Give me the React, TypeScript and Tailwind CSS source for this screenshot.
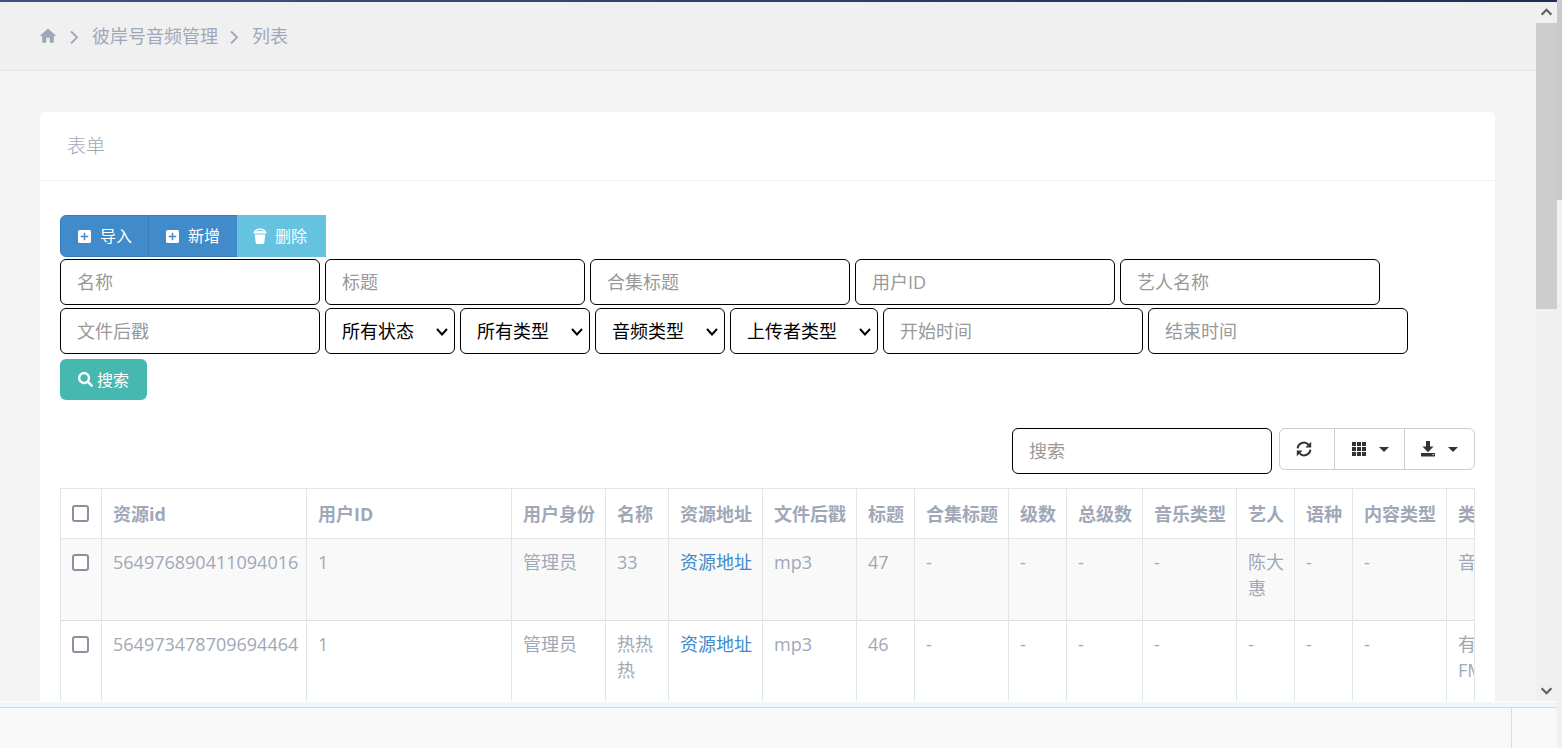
import { FaSearch } from "react-icons/fa";
import { MdHome } from "react-icons/md";

type Filter = { label: string; type: "text" } | { label: string; type: "select"; wide?: boolean };

const filters: Filter[] = [
  { label: "名称", type: "text" },
  { label: "标题", type: "text" },
  { label: "合集标题", type: "text" },
  { label: "用户ID", type: "text" },
  { label: "艺人名称", type: "text" },
  { label: "文件后戳", type: "text" },
  { label: "所有状态", type: "select" },
  { label: "所有类型", type: "select" },
  { label: "音频类型", type: "select" },
  { label: "上传者类型", type: "select", wide: true },
  { label: "开始时间", type: "text" },
  { label: "结束时间", type: "text" },
];

const columns = [
  { title: "资源id", width: "w-[205px]" },
  { title: "用户ID", width: "w-[205px]" },
  { title: "用户身份", width: "w-[94px]" },
  { title: "名称", width: "w-[63px]" },
  { title: "资源地址", width: "w-[94px]" },
  { title: "文件后戳", width: "w-[94px]" },
  { title: "标题", width: "w-[58px]" },
  { title: "合集标题", width: "w-[94px]" },
  { title: "级数", width: "w-[58px]" },
  { title: "总级数", width: "w-[76px]" },
  { title: "音乐类型", width: "w-[94px]" },
  { title: "艺人", width: "w-[58px]" },
  { title: "语种", width: "w-[58px]" },
  { title: "内容类型", width: "w-[94px]" },
  { title: "类型", width: "w-[58px]" },
];

const rows = [
  ["564976890411094016", "1", "管理员", "33", "资源地址", "mp3", "47", "-", "-", "-", "-", "陈大惠", "-", "-", "音频"],
  ["564973478709694464", "1", "管理员", "热热热", "资源地址", "mp3", "46", "-", "-", "-", "-", "-", "-", "-", "有声FM"],
];

const inputClass =
  "h-[46px] w-[260px] rounded-md border border-black bg-white px-4 text-lg text-black placeholder:text-[#999] placeholder:opacity-100 focus:outline-none";

function Chevron({ className, d }: { className: string; d: string }) {
  return (
    <svg className={className} viewBox="0 0 12 12" fill="none" stroke="currentColor">
      <path d={d} />
    </svg>
  );
}

function PlusIcon() {
  return (
    <svg className="size-[15px]" viewBox="0 0 15 15">
      <rect x="1" y="1" width="13" height="13" rx="1.500" fill="currentColor" />
      <path d="M7.500 3.700v7.600M3.700 7.500h7.600" stroke="#428bca" strokeWidth="1.500" />
    </svg>
  );
}

function TrashIcon() {
  return (
    <svg className="h-4 w-[14px]" viewBox="0 0 14 16" fill="currentColor">
      <path d="M1 4.600C1 2 3.400.4 7 .4S13 2 13 4.600z" />
      <path d="M3.600 3.400C5.200 1.800 8.800 1.800 10.400 3.400" stroke="#65c3df" strokeWidth="1" fill="none" />
      <path d="M.6 3.800h12.800v1.600H.6zM1.800 6.400h10.400l-.8 8c-.1 1-1 1.600-2 1.600H4.600c-1 0-1.900-.6-2-1.600z" />
    </svg>
  );
}

function RefreshIcon() {
  return (
    <svg className="size-4" viewBox="0 0 16 16" fill="none" stroke="currentColor" strokeWidth="2">
      <path d="M1.600 7.300A6.300 6.300 0 0 1 12.600 3.800M14.400 8.700A6.300 6.300 0 0 1 3.400 12.200" />
      <path d="M15.200.8v5.800H9.400zM.8 15.200V9.400h5.800z" fill="currentColor" stroke="none" />
    </svg>
  );
}

function GridIcon() {
  return (
    <svg className="size-4" viewBox="0 0 16 16" fill="currentColor">
      <path d="M1 1h4v4H1zM6 1h4v4H6zM11 1h4v4h-4zM1 6h4v4H1zM6 6h4v4H6zM11 6h4v4h-4zM1 11h4v4H1zM6 11h4v4H6zM11 11h4v4h-4z" />
    </svg>
  );
}

function SaveIcon() {
  return (
    <svg className="size-4" viewBox="0 0 16 16" fill="currentColor">
      <path d="M6 0h4v5.500h3.500L8 11.200 2.500 5.500H6z" />
      <path fillRule="evenodd" d="M1 12h14v3.500H1zM12.600 13v1.200h1.200V13z" />
    </svg>
  );
}

function Caret() {
  return (
    <svg className="h-[5px] w-[10px]" viewBox="0 0 10 5" fill="currentColor">
      <path d="M0 0h10L5 5z" />
    </svg>
  );
}

function Checkbox({ label }: { label: string }) {
  return (
    <input
      type="checkbox"
      aria-label={label}
      className="mt-[5px] block size-[17px] appearance-none rounded-[3px] border-2 border-[#918d9f] bg-white checked:bg-[#918d9f]"
    />
  );
}

function FilterField({ filter }: { filter: Filter }) {
  if (filter.type === "text") {
    return <input type="text" aria-label={filter.label} placeholder={filter.label} className={inputClass} />;
  }
  return (
    <div className={filter.wide ? "relative w-[148px]" : "relative w-[130px]"}>
      <select
        aria-label={filter.label}
        className="h-[46px] w-full appearance-none rounded-md border border-black bg-white pl-4 text-lg text-black focus:outline-none"
      >
        <option>{filter.label}</option>
      </select>
      <Chevron
        className="pointer-events-none absolute top-[18px] right-[7px] size-3 stroke-2 text-black"
        d="M1 3l5 5.500 5-5.500"
      />
    </div>
  );
}

function Breadcrumb() {
  return (
    <nav className="flex h-[69px] items-center border-b border-[#e5e5e5] bg-[#f0f0f0] px-10 text-lg">
      <a href="#" aria-label="首页">
        <MdHome className="-ml-0.5 size-5" />
      </a>
      <Chevron className="mx-[9px] size-4 stroke-[1.500]" d="M3 2.500l4.500 4.500L3 11.500" />
      <a href="#">彼岸号音频管理</a>
      <Chevron className="mx-[9px] size-4 stroke-[1.500]" d="M3 2.500l4.500 4.500L3 11.500" />
      <a href="#">列表</a>
    </nav>
  );
}

function Toolbar() {
  return (
    <div className="mt-7 flex items-start justify-end gap-[7px]">
      <input type="text" aria-label="搜索" placeholder="搜索" className={inputClass} />
      <div className="flex h-[42px] divide-x divide-[#ccc] rounded-md border border-[#ccc] text-[#333]">
        <button aria-label="刷新" className="flex w-[55px] items-center pl-4">
          <RefreshIcon />
        </button>
        <button aria-label="列" className="flex w-[70px] items-center gap-3 pl-4">
          <GridIcon />
          <Caret />
        </button>
        <button aria-label="导出" className="flex w-[69px] items-center gap-3 pl-[15px]">
          <SaveIcon />
          <Caret />
        </button>
      </div>
    </div>
  );
}

function ResourceTable() {
  return (
    <div className="mt-[14px] overflow-hidden border-r border-[#e1e6e9]">
      <table className="w-[1444px] table-fixed border-collapse text-left text-lg leading-[26px]">
        <thead>
          <tr className="h-[50px]">
            <th className="w-[41px] border border-[#e1e6e9] pt-[11px] pl-[11px] align-top">
              <Checkbox label="全选" />
            </th>
            {columns.map((col) => (
              <th
                key={col.title}
                className={`${col.width} border border-[#e1e6e9] pr-[10px] pl-[11px] font-bold whitespace-nowrap`}
              >
                {col.title}
              </th>
            ))}
          </tr>
        </thead>
        <tbody>
          {rows.map((row) => (
            <tr key={row[0]} className="h-[82px] border-b border-[#ddd] align-top odd:bg-[#f9f9f9]">
              <td className="border-x border-[#e1e6e9] pt-[10px] pl-[11px]">
                <Checkbox label={row[0]} />
              </td>
              {row.map((value, i) => (
                <td key={columns[i].title} className="border-x border-[#e1e6e9] pt-[10px] pr-[10px] pl-[11px]">
                  {columns[i].title === "资源地址" ? (
                    <a href="#" className="text-[#428bca]">
                      {value}
                    </a>
                  ) : (
                    value
                  )}
                </td>
              ))}
            </tr>
          ))}
        </tbody>
      </table>
    </div>
  );
}

export default function App() {
  return (
    <div className="flex h-screen overflow-hidden bg-[#f0f0f0] font-['Open_Sans','Noto_Sans_CJK_SC',sans-serif] text-[#a0a8b8]">
      <div className="flex min-w-0 flex-1 flex-col">
        <div className="h-0.5 shrink-0 bg-linear-to-r from-[#3c5480] to-[#1b2f55]" />

        <div className="flex min-h-0 flex-1">
          <main className="min-w-0 flex-1 overflow-hidden bg-[#f4f4f4]">
            <Breadcrumb />
            <section className="mt-[41px] mr-[41px] ml-10 rounded-md bg-white">
              <h1 className="flex h-[69px] items-center border-b border-dotted border-[#e4e4e4] px-[27px] text-[19px] font-light">
                表单
              </h1>
              <div className="px-5 pt-[34px]">
                <div className="flex h-[42px] text-base text-white">
                  <button className="flex w-[89px] items-center gap-2 rounded-l-md border border-[#357ebd] bg-[#428bca] pl-4">
                    <PlusIcon />
                    导入
                  </button>
                  <button className="flex w-[88px] items-center gap-2 border-y border-[#357ebd] bg-[#428bca] pl-4">
                    <PlusIcon />
                    新增
                  </button>
                  <button className="flex w-[89px] items-center gap-2 bg-[#65c3df] pl-4">
                    <TrashIcon />
                    删除
                  </button>
                </div>

                <form className="mt-0.5 flex flex-wrap gap-x-[5px] gap-y-[3px]">
                  {filters.map((filter) => (
                    <FilterField key={filter.label} filter={filter} />
                  ))}
                  <button
                    type="button"
                    className="mt-0.5 flex h-[41px] w-[87px] items-center justify-center gap-1 rounded-md bg-[#46b8b0] text-base text-white"
                  >
                    <FaSearch className="size-[15px]" />
                    搜索
                  </button>
                </form>

                <Toolbar />
                <ResourceTable />
              </div>
            </section>
          </main>

          {/* inner scroll track */}
          <div className="flex w-[21px] shrink-0 flex-col items-center text-[#606060]">
            <Chevron className="my-1 size-[13px] shrink-0 stroke-2" d="M1.500 8L6 3.500 10.500 8" />
            <div className="h-[286px] w-full shrink-0 bg-[#cdcdcd]" />
            <Chevron className="mt-auto mb-1 size-[13px] shrink-0 stroke-2" d="M1.500 4L6 8.500 10.500 4" />
          </div>
        </div>

        <footer className="flex h-[47px] shrink-0 flex-col border-t border-white bg-[#f8f8f8]">
          <div className="h-[5px] bg-[#eef6fe]" />
          <div className="flex flex-1 justify-end border-t border-[#d9dbdd]">
            <div className="w-[46px] border-l border-[#d9dbdd]" />
          </div>
        </footer>
      </div>

      {/* outer scroll track */}
      <div className="w-[5px] shrink-0">
        <div className="h-[200px] bg-[#cacaca]" />
      </div>
    </div>
  );
}
